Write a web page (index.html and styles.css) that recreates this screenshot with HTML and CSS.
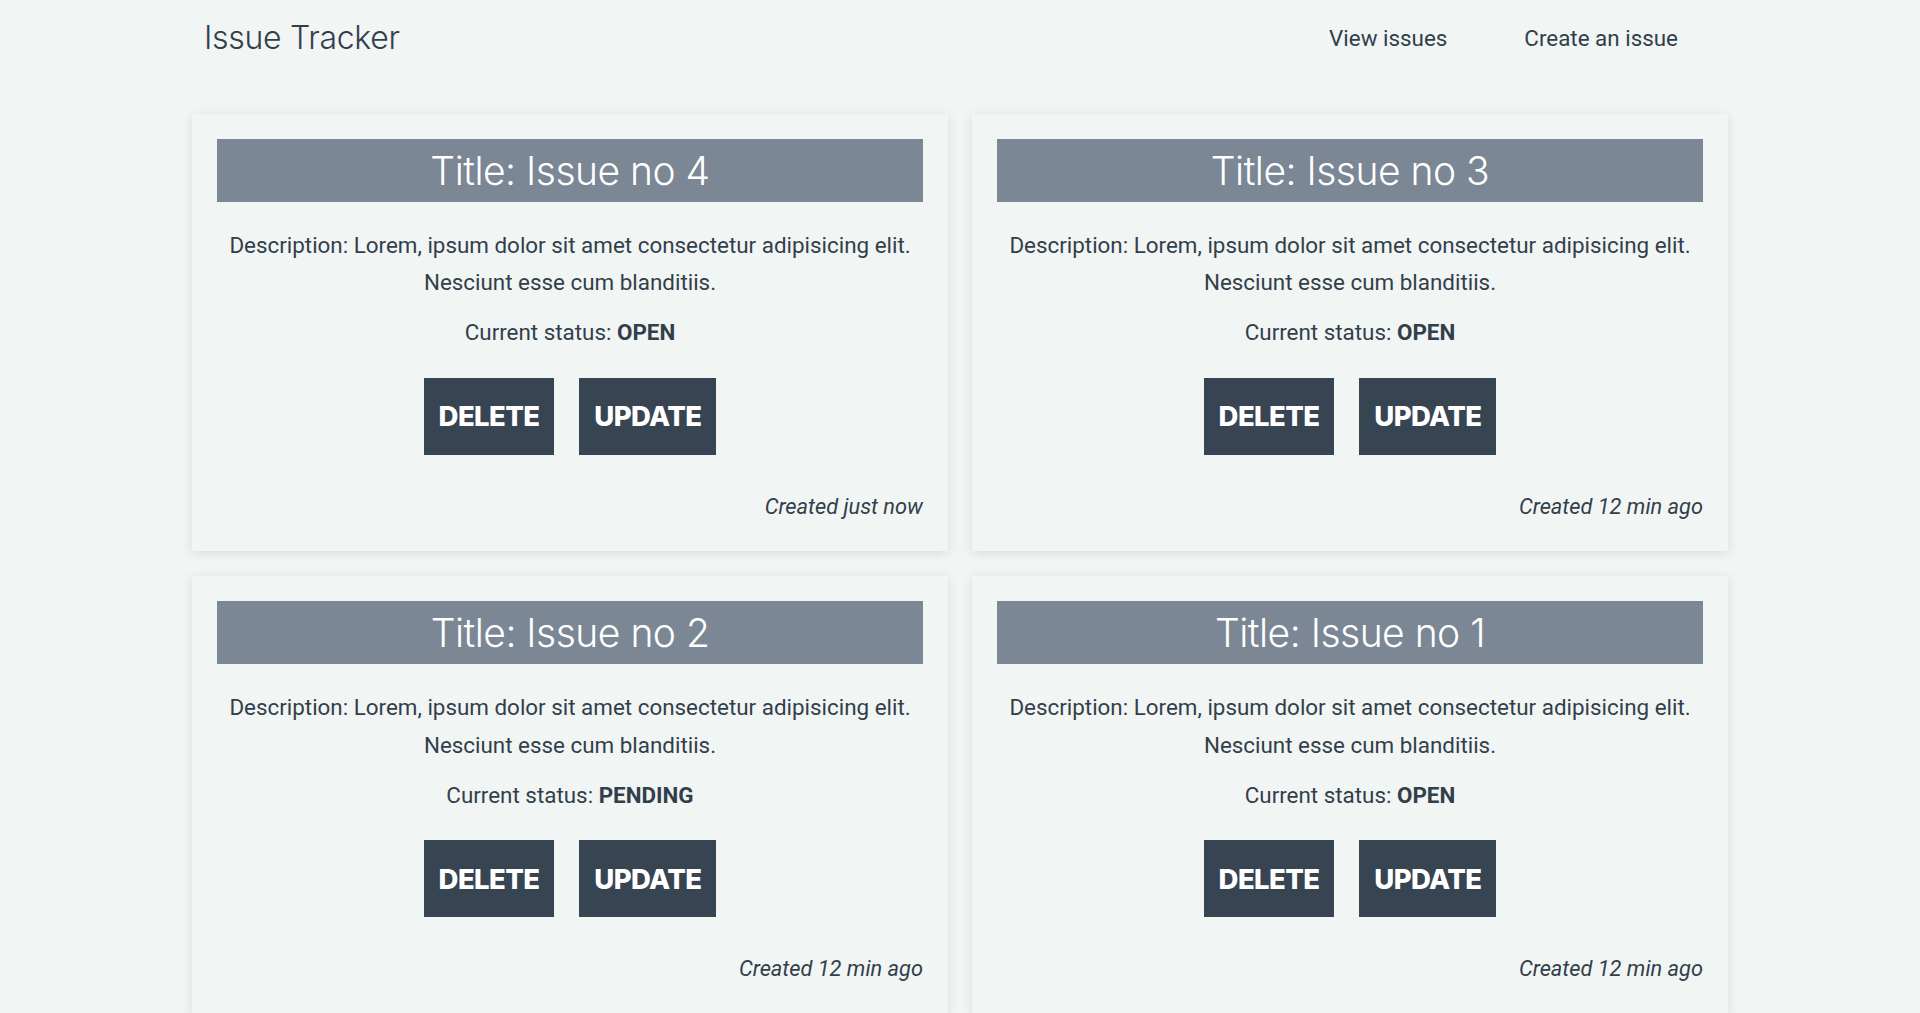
FILE: index.html
```html
<!DOCTYPE html>
<html lang="en">
<head>
<meta charset="utf-8">
<title>Issue Tracker</title>
<link rel="stylesheet" href="styles.css">
</head>
<body>
<div class="container">
  <header class="header">
    <div class="logo">Issue Tracker</div>
    <nav class="nav">
      <a class="nav-link" href="#">View issues</a>
      <a class="nav-link" href="#">Create an issue</a>
    </nav>
  </header>
  <main class="grid">
    <section class="card">
      <h2 class="card-title">Title: Issue no 4</h2>
      <p class="desc">Description: Lorem, ipsum dolor sit amet consectetur adipisicing elit. Nesciunt esse cum blanditiis.</p>
      <p class="status">Current status: <b>OPEN</b></p>
      <div class="actions">
        <button class="btn">DELETE</button>
        <button class="btn">UPDATE</button>
      </div>
      <p class="created">Created just now</p>
    </section>
    <section class="card">
      <h2 class="card-title">Title: Issue no 3</h2>
      <p class="desc">Description: Lorem, ipsum dolor sit amet consectetur adipisicing elit. Nesciunt esse cum blanditiis.</p>
      <p class="status">Current status: <b>OPEN</b></p>
      <div class="actions">
        <button class="btn">DELETE</button>
        <button class="btn">UPDATE</button>
      </div>
      <p class="created">Created 12 min ago</p>
    </section>
    <section class="card">
      <h2 class="card-title">Title: Issue no 2</h2>
      <p class="desc">Description: Lorem, ipsum dolor sit amet consectetur adipisicing elit. Nesciunt esse cum blanditiis.</p>
      <p class="status">Current status: <b>PENDING</b></p>
      <div class="actions">
        <button class="btn">DELETE</button>
        <button class="btn">UPDATE</button>
      </div>
      <p class="created">Created 12 min ago</p>
    </section>
    <section class="card">
      <h2 class="card-title">Title: Issue no 1</h2>
      <p class="desc">Description: Lorem, ipsum dolor sit amet consectetur adipisicing elit. Nesciunt esse cum blanditiis.</p>
      <p class="status">Current status: <b>OPEN</b></p>
      <div class="actions">
        <button class="btn">DELETE</button>
        <button class="btn">UPDATE</button>
      </div>
      <p class="created">Created 12 min ago</p>
    </section>
  </main>
</div>
</body>
</html>
```

FILE: styles.css
```css
* { box-sizing: border-box; }
html, body { margin: 0; padding: 0; }
body {
  background: #f1f5f4;
  color: #323f4b;
  font-family: Roboto, "Liberation Sans", sans-serif;
}
.container {
  width: 1536px;
  margin: 0 auto;
}
.header {
  display: flex;
  justify-content: space-between;
  align-items: flex-start;
  height: 114px;
  padding-top: 14px;
}
.logo {
  font-family: Inter, "Noto Sans", sans-serif;
  font-weight: 300;
  font-size: 32px;
  line-height: 48px;
  padding-left: 12px;
  letter-spacing: -0.3px;
}
.nav {
  display: flex;
  gap: 77px;
  padding-right: 50px;
  padding-top: 8px;
}
.nav-link {
  color: #323f4b;
  text-decoration: none;
  font-size: 22.4px;
  line-height: 32px;
}
.grid {
  display: grid;
  grid-template-columns: 1fr 1fr;
  column-gap: 24px;
  row-gap: 25px;
}
.card {
  background: #f1f5f4;
  box-shadow: 0 2px 10px rgba(40, 50, 60, 0.12);
  padding: 25px 25px 26px;
  text-align: center;
}
.card-title {
  margin: 0;
  background: #7b8794;
  color: #fff;
  font-family: Inter, "Noto Sans", sans-serif;
  font-weight: 300;
  font-size: 39px;
  line-height: 63px;
  height: 63px;
  letter-spacing: -0.5px;
}
.desc {
  margin: 25px 0 0;
  font-size: 22.4px;
  line-height: 37.44px;
}
.status {
  margin: 12.5px 0 0;
  font-size: 22.4px;
  line-height: 37.44px;
}
.status b { font-weight: 700; }
.actions {
  display: flex;
  justify-content: center;
  gap: 25px;
  margin-top: 26px;
}
.btn {
  background: #374451;
  color: #fff;
  border: 0;
  border-radius: 0;
  height: 77px;
  padding: 0 15px;
  font-family: Inter, "Noto Sans", sans-serif;
  font-weight: 800;
  font-size: 27.5px;
  letter-spacing: -0.6px;
}
.created {
  margin: 33px 0 0;
  text-align: right;
  font-style: italic;
  font-size: 21.8px;
  line-height: 37.44px;
}
```
